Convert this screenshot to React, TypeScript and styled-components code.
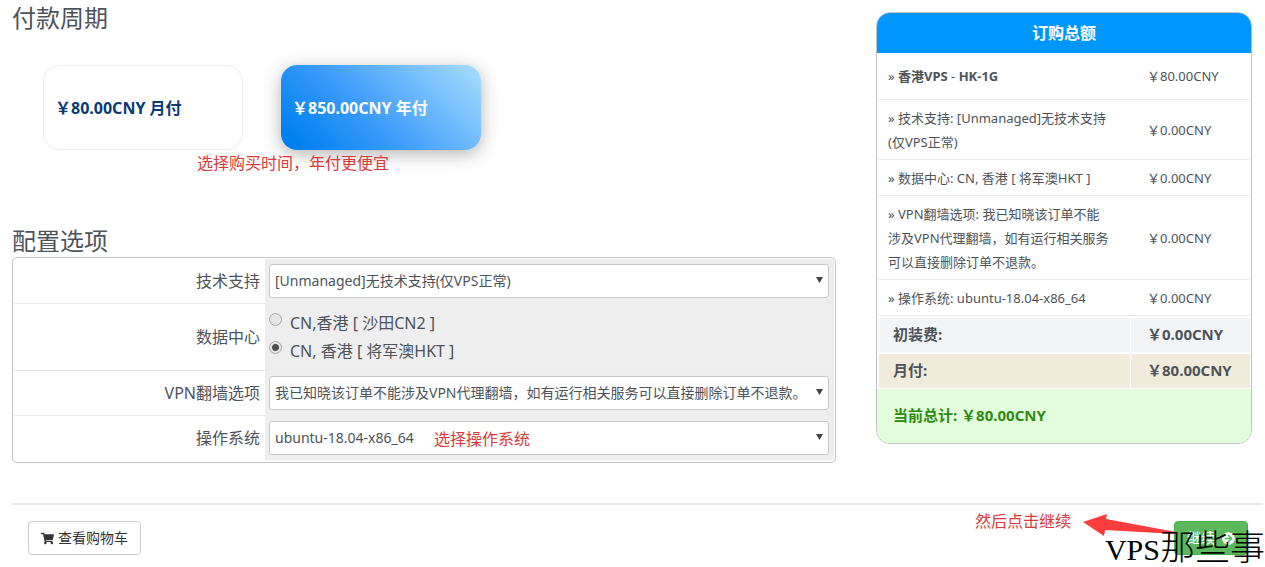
import React from "react";
import styled, { createGlobalStyle } from "styled-components";
import { FaShoppingCart, FaArrowCircleRight } from "react-icons/fa";

const GlobalStyle = createGlobalStyle`
  *, *::before, *::after { box-sizing: border-box; }
  body {
    margin: 0;
    background: #fff;
    color: #4d5358;
    font: 16px/24px "Noto Sans", "Noto Sans CJK SC", sans-serif;
  }
  button, select, input { font-family: inherit; color: inherit; }
`;

const Page = styled.div`
  padding: 0 2px 0 12px;
`;

const Columns = styled.div`
  display: flex;
  align-items: flex-start;
  gap: 40px;
  padding-right: 11px;
`;

const Main = styled.main`
  flex: 1;
  min-width: 0;
`;

const Title = styled.h2`
  margin: 0;
  font-size: 24px;
  font-weight: 400;
  line-height: 32px;
`;

const Section = styled.section`
  padding-top: 2px;
`;

const Cycles = styled.div`
  position: relative;
  display: flex;
  gap: 38px;
  padding: 31px 31px 75px;
`;

const CycleCard = styled.button<{ $active?: boolean }>`
  width: 200px;
  height: 85px;
  padding: 0 11px;
  border: ${(p) => (p.$active ? "0" : "1px solid #ededf0")};
  border-radius: 16px;
  background: ${(p) =>
    p.$active ? "linear-gradient(45deg, #0080f0 8%, #3b9bfa 42%, #a8deff 100%)" : "#fff"};
  box-shadow: ${(p) => (p.$active ? "0 4px 18px rgba(0, 0, 0, 0.3)" : "none")};
  color: ${(p) => (p.$active ? "#fff" : "#0a3a72")};
  font-size: 16px;
  font-weight: 700;
  line-height: 24px;
  text-align: left;
`;

const Note = styled.span`
  position: absolute;
  color: #d93a3a;
  font-size: 16px;
  line-height: 20px;
  white-space: nowrap;
  pointer-events: none;
`;

const CycleNote = styled(Note)`
  left: 185px;
  top: 119px;
`;

const SystemNote = styled(Note)`
  left: 165px;
  top: 8px;
`;

const ContinueNote = styled(Note)`
  right: 192px;
  top: 6px;
`;

const Options = styled.table`
  width: 100%;
  border: 1px solid #c4c4c4;
  border-radius: 5px;
  border-spacing: 0;
  padding: 1px 1px 2px;

  th, td { border-bottom: 1px solid #ebebeb; }
  tr:last-child > * { border-bottom: 0; }
`;

const OptionLabel = styled.th`
  width: 251px;
  padding: 0 5px 0 0;
  font-weight: 400;
  text-align: right;
`;

const OptionCell = styled.td`
  padding: 5px 5px 5px 4px;
  background: #eee;
`;

const SelectBox = styled.div`
  position: relative;
  display: flex;
`;

const Select = styled.select`
  width: 100%;
  height: 34px;
  padding: 0 20px 0 5px;
  border: 1px solid #c8c8c8;
  border-radius: 3px;
  background: #fff;
  font-size: 14px;
  line-height: 20px;
  appearance: none;
`;

const Caret = styled.svg`
  position: absolute;
  top: 13px;
  right: 6px;
  fill: #444;
  pointer-events: none;
`;

const RadioLabel = styled.label`
  display: flex;
  align-items: flex-start;
  gap: 8px;
  line-height: 28px;
`;

const Radio = styled.input`
  appearance: none;
  width: 13px;
  height: 13px;
  margin: 4px 0 0;
  border: 1px solid #a8a8a8;
  border-radius: 50%;
  background: #e6e6e6;

  &:checked {
    background: radial-gradient(circle, #505050 0 3px, #e6e6e6 4px);
  }
`;

const Summary = styled.aside`
  flex: none;
  width: 376px;
  margin-top: 12px;
  padding: 0 1px;
  border: 1px solid #c3c3c3;
  border-radius: 14px;
  overflow: hidden;
`;

const SummaryTitle = styled.h3`
  margin: 0 -1px;
  background: #0096ff;
  color: #fff;
  font-size: 16px;
  line-height: 40px;
  text-align: center;
`;

const SummaryTable = styled.table`
  width: 100%;
  table-layout: fixed;
  border-spacing: 0;
  font-size: 13px;
`;

const ItemRow = styled.tr<{ $tall?: boolean }>`
  th, td {
    padding: ${(p) => (p.$tall ? "11px" : "6px")} 19px ${(p) => (p.$tall ? "11px" : "5px")} 17px;
    border-bottom: 1px solid #e8eaec;
    font-weight: 400;
    text-align: left;
  }
  th { padding-left: 10px; }
`;

const NameColumn = styled.col`
  width: 252px;
`;

const TotalRow = styled.tr<{ $tone: string }>`
  th, td {
    padding: 4px 0 6px 16px;
    border-top: 2px solid #fff;
    border-left: 1px solid #fff;
    background: ${(p) => p.$tone};
    font-size: 15px;
    font-weight: 700;
    text-align: left;
  }
  th { padding-left: 14px; }
`;

const GrandTotal = styled.p`
  margin: 1px -1px 0;
  padding: 14px 16px 16px;
  background: #e2fddb;
  color: #2f8a10;
  font-size: 15px;
  font-weight: 700;
`;

const Footer = styled.footer`
  position: relative;
  display: flex;
  justify-content: space-between;
  margin-top: 40px;
  padding: 16px 15px 12px 16px;
  border-top: 2px solid #e8e8e8;
`;

const Button = styled.button<{ $primary?: boolean }>`
  display: flex;
  align-items: center;
  gap: ${(p) => (p.$primary ? "7px" : "4px")};
  height: 34px;
  padding: 0 12px;
  border: 1px solid ${(p) => (p.$primary ? "#4cae4c" : "#ccc")};
  border-radius: 4px;
  background: ${(p) => (p.$primary ? "#5cb85c" : "#fff")};
  color: ${(p) => (p.$primary ? "#fff" : "#333")};
  font-size: 14px;
  line-height: 20px;
`;

const Arrow = styled.svg`
  position: absolute;
  top: 8px;
  right: 87px;
  fill: #fb3d3d;
`;

const Watermark = styled.span`
  position: absolute;
  right: -2px;
  bottom: 0;
  color: #000;
  font: 300 35px/34px "Noto Sans CJK SC", sans-serif;
  white-space: nowrap;
  pointer-events: none;
`;

const WatermarkLatin = styled.span`
  font-family: "Liberation Serif", serif;
  font-size: 30px;
`;

const items = [
  { name: "技术支持: [Unmanaged]无技术支持(仅VPS正常)", price: "￥0.00CNY" },
  { name: "数据中心: CN, 香港 [ 将军澳HKT ]", price: "￥0.00CNY" },
  { name: "VPN翻墙选项: 我已知晓该订单不能涉及VPN代理翻墙，如有运行相关服务可以直接删除订单不退款。", price: "￥0.00CNY" },
  { name: "操作系统: ubuntu-18.04-x86_64", price: "￥0.00CNY" },
];

function Dropdown({ id, value, children }: { id: string; value: string; children?: React.ReactNode }) {
  return (
    <SelectBox>
      <Select id={id} defaultValue={value}>
        <option>{value}</option>
      </Select>
      <Caret width="7" height="6" viewBox="0 0 7 6" aria-hidden="true">
        <path d="M0 0H7L3.5 6Z" />
      </Caret>
      {children}
    </SelectBox>
  );
}

export default function App() {
  return (
    <Page>
      <GlobalStyle />
      <Columns>
        <Main>
          <Section>
            <Title>付款周期</Title>
            <Cycles>
              <CycleCard type="button">￥80.00CNY 月付</CycleCard>
              <CycleCard type="button" $active>￥850.00CNY 年付</CycleCard>
              <CycleNote>选择购买时间，年付更便宜</CycleNote>
            </Cycles>
          </Section>
          <Title>配置选项</Title>
          <Options>
            <tbody>
              <tr>
                <OptionLabel scope="row"><label htmlFor="support">技术支持</label></OptionLabel>
                <OptionCell><Dropdown id="support" value="[Unmanaged]无技术支持(仅VPS正常)" /></OptionCell>
              </tr>
              <tr>
                <OptionLabel scope="row">数据中心</OptionLabel>
                <OptionCell>
                  <RadioLabel><Radio type="radio" name="dc" />CN,香港 [ 沙田CN2 ]</RadioLabel>
                  <RadioLabel><Radio type="radio" name="dc" defaultChecked />CN, 香港 [ 将军澳HKT ]</RadioLabel>
                </OptionCell>
              </tr>
              <tr>
                <OptionLabel scope="row"><label htmlFor="vpn">VPN翻墙选项</label></OptionLabel>
                <OptionCell>
                  <Dropdown id="vpn" value="我已知晓该订单不能涉及VPN代理翻墙，如有运行相关服务可以直接删除订单不退款。" />
                </OptionCell>
              </tr>
              <tr>
                <OptionLabel scope="row"><label htmlFor="system">操作系统</label></OptionLabel>
                <OptionCell>
                  <Dropdown id="system" value="ubuntu-18.04-x86_64">
                    <SystemNote>选择操作系统</SystemNote>
                  </Dropdown>
                </OptionCell>
              </tr>
            </tbody>
          </Options>
        </Main>
        <Summary>
          <SummaryTitle>订购总额</SummaryTitle>
          <SummaryTable>
            <colgroup><NameColumn /><col /></colgroup>
            <tbody>
              <ItemRow $tall>
                <th scope="row">» <b>香港VPS</b> - <b>HK-1G</b></th>
                <td>￥80.00CNY</td>
              </ItemRow>
              {items.map((item) => (
                <ItemRow key={item.name}>
                  <th scope="row">» {item.name}</th>
                  <td>{item.price}</td>
                </ItemRow>
              ))}
              <TotalRow $tone="#f3f4f6">
                <th scope="row">初装费:</th>
                <td>￥0.00CNY</td>
              </TotalRow>
              <TotalRow $tone="#f1ebdb">
                <th scope="row">月付:</th>
                <td>￥80.00CNY</td>
              </TotalRow>
            </tbody>
          </SummaryTable>
          <GrandTotal>当前总计: ￥80.00CNY</GrandTotal>
        </Summary>
      </Columns>
      <Footer>
        <Button type="button"><FaShoppingCart size={13} />查看购物车</Button>
        <Button type="button" $primary>继续 <FaArrowCircleRight size={13} /></Button>
        <ContinueNote>然后点击继续</ContinueNote>
        <Arrow width="93" height="24" viewBox="0 0 93 24" aria-hidden="true">
          <path d="M0 9L24 1L23 6L93 19V21L22 17L21 23Z" />
        </Arrow>
        <Watermark><WatermarkLatin>VPS</WatermarkLatin>那些事</Watermark>
      </Footer>
    </Page>
  );
}
